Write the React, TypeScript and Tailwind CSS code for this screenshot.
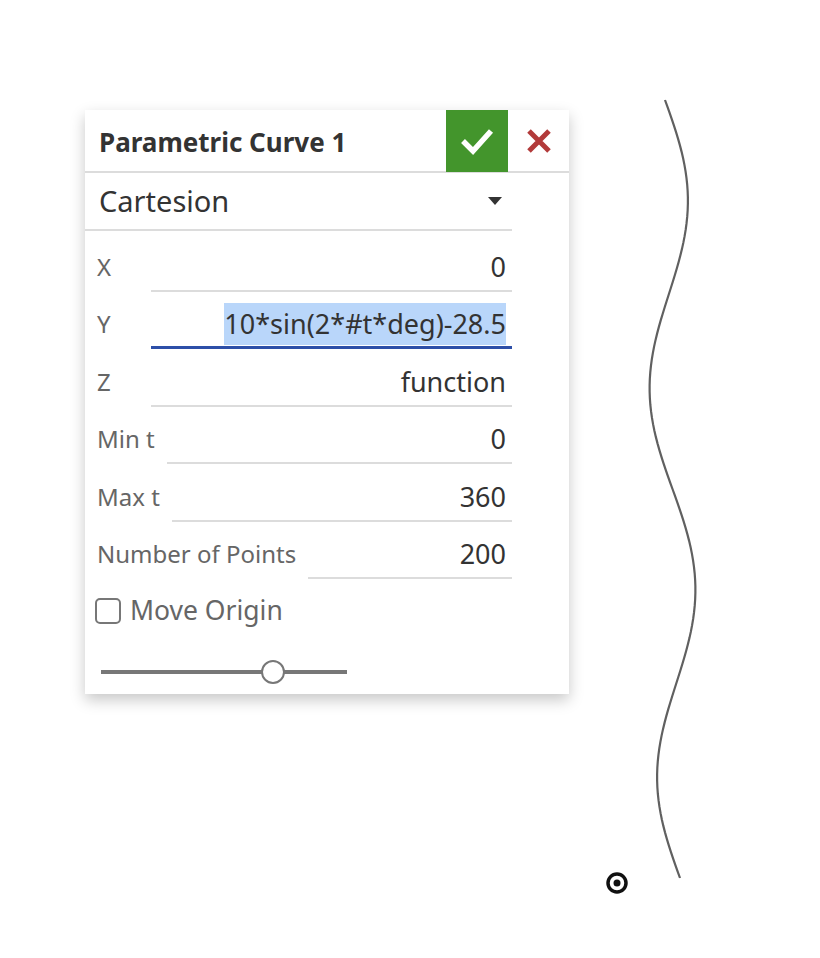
import React from 'react';

const font = { fontFamily: '"Noto Sans", "Open Sans", sans-serif' };

// sampled wave for the sketch curve on the right
const curvePoints = (() => {
  const pts: string[] = [];
  for (let t = 0; t <= 360; t += 3) {
    const y = 100 + (t / 360) * 778;
    const x = 665 + (15 * t) / 360 + 21 * Math.sin((2 * t * Math.PI) / 180);
    pts.push(`${x.toFixed(2)},${y.toFixed(2)}`);
  }
  return pts.join(' ');
})();

interface FieldProps {
  label: string;
  value: string;
  active?: boolean;
}

const Field: React.FC<FieldProps> = ({ label, value, active }) => (
  <div className="flex items-end h-[57.5px]">
    <span className="min-w-[42px] mr-[12px] pb-[9px] text-[24px] leading-[32px] text-[#666]">{label}</span>
    <div
      className={`flex-1 flex justify-end pr-[6px] ${
        active ? 'border-b-[3px] border-[#2d4fa8] pb-[1px]' : 'border-b-2 border-[#dcdcdc] pb-[7px]'
      }`}
    >
      <span className={`text-[27px] leading-[32px] text-[#333] ${active ? 'bg-[#b9d6fa] py-[5px]' : ''}`}>{value}</span>
    </div>
  </div>
);

export default function App() {
  return (
    <div className="relative w-[820px] h-[958px] bg-white overflow-hidden" style={font}>
      <svg className="absolute inset-0" width="820" height="958" viewBox="0 0 820 958">
        <polyline points={curvePoints} fill="none" stroke="#606060" strokeWidth="2.2" />
        <circle cx="617" cy="883" r="9" fill="none" stroke="#111" strokeWidth="3.5" />
        <circle cx="617" cy="883" r="3.5" fill="#111" />
      </svg>

      <div className="absolute left-[85px] top-[110px] w-[484px] bg-white shadow-[0_6px_14px_rgba(0,0,0,0.22)]">
        <div className="flex items-center h-[63px] border-b-2 border-[#dcdcdc]">
          <h1 className="flex-1 pl-[14px] pt-[3px] text-[26px] font-bold text-[#333]">Parametric Curve 1</h1>
          <button className="self-start w-[62px] h-[62px] bg-[#43952c] flex items-center justify-center">
            <svg width="36" height="28" viewBox="0 0 36 28">
              <path d="M4 14 L14 24 L32 4" fill="none" stroke="#fff" strokeWidth="5.5" />
            </svg>
          </button>
          <button className="w-[61px] h-[62px] flex items-center justify-center">
            <svg width="26" height="26" viewBox="0 0 26 26">
              <path d="M3 3 L23 23 M23 3 L3 23" stroke="#b23a3a" strokeWidth="5" />
            </svg>
          </button>
        </div>

        <div className="pr-[57px]">
          <div className="flex items-center h-[58px] pl-[14px] pr-[10px] border-b-2 border-[#dcdcdc]">
            <span className="flex-1 text-[29px] text-[#333]">Cartesion</span>
            <svg width="14" height="8" viewBox="0 0 14 8">
              <path d="M0 0 L14 0 L7 8 Z" fill="#333" />
            </svg>
          </div>

          <div className="pl-[12px] pt-[3px]">
            <Field label="X" value="0" />
            <Field label="Y" value="10*sin(2*#t*deg)-28.5" active />
            <Field label="Z" value="function" />
            <Field label="Min t" value="0" />
            <Field label="Max t" value="360" />
            <Field label="Number of Points" value="200" />
          </div>
        </div>

        <label className="flex items-center gap-[9px] pl-[10px] mt-[17px] h-[30px]">
          <span className="w-[26px] h-[26px] rounded-[5px] border-2 border-[#777] bg-white" />
          <span className="text-[26.5px] text-[#666]">Move Origin</span>
        </label>

        <div className="pl-[16px] pt-[44px] pb-[20px]">
          <div className="relative w-[246px] h-[4px] bg-[#777]">
            <span className="absolute left-[160px] top-[-10px] w-[24px] h-[24px] rounded-full bg-white border-2 border-[#777]" />
          </div>
        </div>
      </div>
    </div>
  );
}
